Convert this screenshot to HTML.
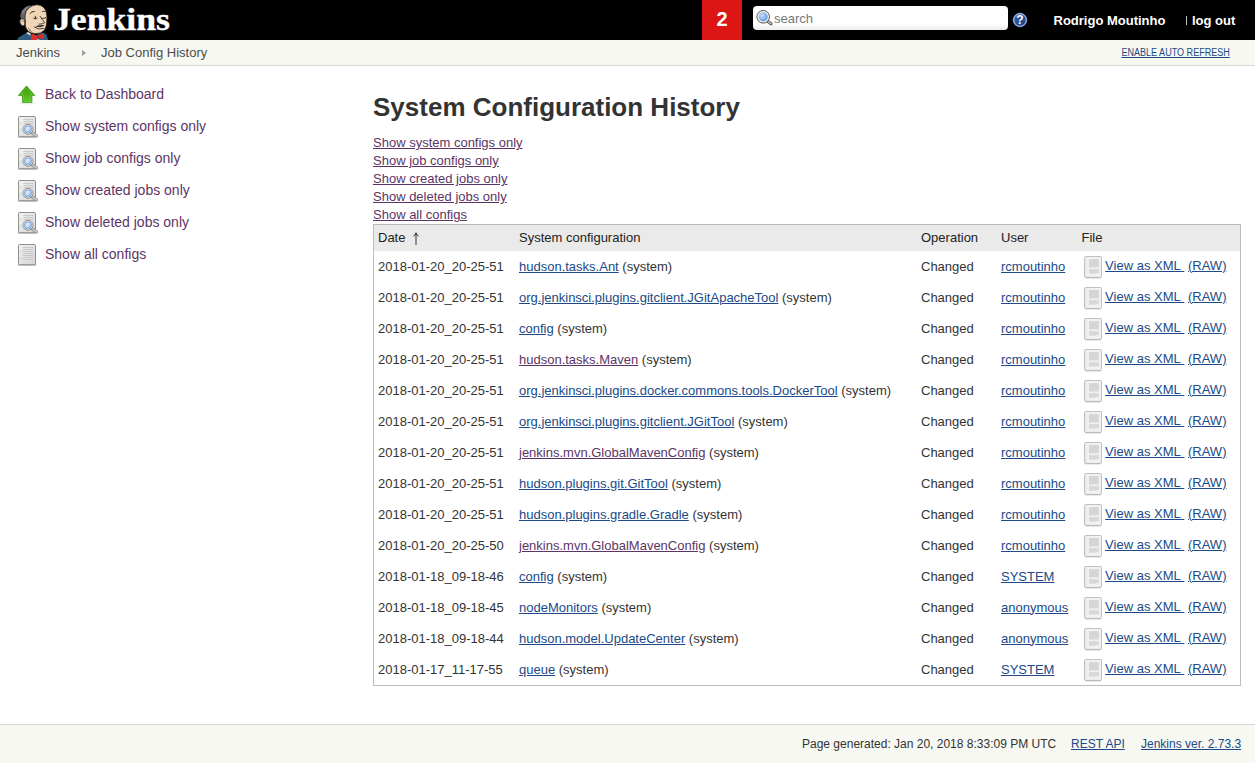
<!DOCTYPE html>
<html><head><meta charset="utf-8"><title>Job Config History [Jenkins]</title>
<style>
*{box-sizing:border-box}
html,body{margin:0;padding:0}
body{width:1255px;height:763px;overflow:hidden;background:#fff;font-family:"Liberation Sans",sans-serif;font-size:13px;color:#333;position:relative}
a{color:#204a87;text-decoration:underline}
a.v{color:#5c3566}
#header{position:absolute;left:0;top:0;width:1255px;height:40px;background:#000}
#logo{position:absolute;left:0;top:0}
#title{position:absolute;left:53px;top:-1px;font-family:"Liberation Serif",serif;font-weight:bold;font-size:32px;color:#fff;line-height:40px;transform:scaleX(1.115);transform-origin:0 0;-webkit-text-stroke:.35px #fff}
#badge{position:absolute;left:702px;top:0;width:40px;height:40px;background:#dc1515;color:#fff;font-weight:bold;font-size:20px;line-height:38px;text-align:center}
#search{position:absolute;left:753px;top:6px;width:255px;height:24px;background:linear-gradient(#fff 70%,#ededed);border-radius:4px}
#search span{position:absolute;left:21px;top:5px;font-size:13px;color:#777;line-height:15px}
#search svg{position:absolute;left:3px;top:3px}
#help{position:absolute;left:1012px;top:12px}
#user{position:absolute;left:1053.5px;top:13px;color:#fff;font-weight:bold;font-size:13px;line-height:16px}
#logout{position:absolute;left:1184px;top:13px;color:#fff;font-size:13px;line-height:16px}
#logout b{position:absolute;left:8px;top:0;white-space:nowrap}#logout i{position:absolute;left:2px;top:2.5px;width:1px;height:9px;background:#bbb}
#bc{position:absolute;left:0;top:40px;width:1255px;height:26px;background:#f6f8f1;border-bottom:1px solid #d3d7cf;font-size:13px;color:#4d4d4d;line-height:25px}
#bc .a{position:absolute;left:16px;top:0}
#bc .b{position:absolute;left:101px;top:0}
#bc .sep{position:absolute;left:82px;top:10px;width:0;height:0;border-left:4.5px solid #9a9a9a;border-top:3.5px solid transparent;border-bottom:3.5px solid transparent}
#bc .ar{position:absolute;right:25px;top:0;font-size:10px;transform:scaleX(.905);transform-origin:100% 50%;color:#204a87;text-decoration:underline}
#side{position:absolute;left:0;top:78px}
.task{position:absolute;left:0;height:32px;width:340px}
.task svg{position:absolute;left:15px;top:4px}
.task span{position:absolute;left:45px;top:7px;font-size:14px;color:#5c3566;line-height:18px;white-space:nowrap}
h1{position:absolute;left:373px;top:90px;margin:0;font-size:26px;font-weight:bold;color:#333;line-height:34px;white-space:nowrap}
#links{position:absolute;left:373px;top:134px;line-height:18px;font-size:13px}
#links a{display:block;color:#5c3566;white-space:nowrap}
table{position:absolute;left:373px;top:224px;width:868px;border-collapse:collapse;border:1px solid #bbb;font-size:13px}
th{background:#eaeaea;font-weight:normal;text-align:left;height:26px;padding:0 4px;color:#222}
td{height:31px;padding:0 4px;white-space:nowrap;color:#333;vertical-align:middle}
td:nth-child(2),th:nth-child(2){padding-left:4.5px}td:nth-child(3),th:nth-child(3),td:nth-child(4),th:nth-child(4){padding-left:3.5px}td.f{padding:0}td.f div{position:relative;height:31px;padding-left:27.6px;line-height:29px}
.di{position:absolute;left:6px;top:5px}
#footer{position:absolute;left:0;top:724px;width:1255px;height:39px;background:#f6f8f1;border-top:1px solid #d3d7cf;font-size:12px;color:#333}
#footer span{position:absolute;top:12px;line-height:15px;white-space:nowrap}
</style></head><body>
<div id="header">
<svg id="logo" width="60" height="40" viewBox="0 0 60 40">
<path d="M17 40 L18.5 37.5 L26 33 L34 36 L43 32.5 L46.5 34.5 L48.2 40 Z" fill="#2d5c7f"/>
<path d="M26 33 L30 35.5 L31 33.8 L28 32 Z" fill="#d9dde0"/>
<path d="M21.3 12.6 Q24.6 6 30.8 5.3 L27.5 12 L26.5 21 L21.4 19.6 Q19.4 16 21.3 12.6 Z" fill="#626267"/>
<path d="M21.6 12 Q24.6 7.6 28.4 6.4 M22.4 14 Q24.4 10 26.6 8.4" stroke="#a4a4a8" stroke-width=".7" fill="none"/>
<path d="M25.3 21 Q24.2 13 27.8 9 Q31.5 4.8 37 4.8 Q44 5 46.3 12 Q47.3 16 46.8 21 Q46.8 26 44.5 30 Q41 34 36 33.6 Q31.5 34.3 27.8 31 Q24.5 27 25.3 21 Z" fill="#f0d6b7" stroke="#1d1a16" stroke-width=".7"/>
<path d="M24.6 19.6 Q21 17.6 19.8 20.6 Q19.4 24.6 22.8 26 Q24.4 25.8 24.8 24.2 Z" fill="#f0d6b7" stroke="#1d1a16" stroke-width=".7"/>
<path d="M21.3 21.5 Q22.3 20.2 23.6 21.2" stroke="#3a2a1c" stroke-width=".6" fill="none"/>
<path d="M30 13.6 Q31.6 11 34.2 11.4" stroke="#1d1a16" stroke-width=".9" fill="none" stroke-linecap="round"/>
<path d="M42.2 11.6 Q44 10.8 45.4 11.6" stroke="#1d1a16" stroke-width=".8" fill="none" stroke-linecap="round"/>
<path d="M33.6 18.4 Q35.2 19.6 37 18.2 M35.2 16.2 L35.6 18" stroke="#1d1a16" stroke-width=".9" fill="none" stroke-linecap="round"/>
<path d="M42.6 18.4 Q44.4 18.8 45.8 17.6" stroke="#1d1a16" stroke-width=".9" fill="none" stroke-linecap="round"/>
<path d="M40.2 16.4 Q42 20 44.8 22.6 Q43 24.2 39 24.2" stroke="#1d1a16" stroke-width=".8" fill="none" stroke-linecap="round"/>
<path d="M35.6 26.2 Q38.4 25 39.6 25.6 Q42 24.6 44.8 25.6 Q42.4 27.2 39.6 27 Q37.6 27.4 35.6 26.2 Z" fill="#2e2620"/>
<path d="M34.2 27 Q38.6 30.4 43.6 28.4" stroke="#1d1a16" stroke-width=".8" fill="none" stroke-linecap="round"/>
<path d="M28.4 28.2 Q30.4 31.4 33 33.4" stroke="#1d1a16" stroke-width=".6" fill="none"/>
<path d="M31 34.2 Q33 33.2 37.6 36 Q41 33.4 43.8 33.8 Q44.4 36.4 43.6 39 Q41 39.4 38.4 37.6 L37.4 40 L31.4 40 Q30.4 37 31 34.2 Z" fill="#d8302a"/>
<path d="M37.4 35.8 L38.8 35.8 L38.8 38 L37.4 38 Z" fill="#b21f1b"/>
<path d="M38 39 L39.6 40 L37 40 Z" fill="#e9e9e9"/>
</svg>
<div id="title">Jenkins</div>
<div id="badge">2</div>
<div id="search"><svg width="20" height="20" viewBox="0 0 20 20"><defs><radialGradient id="sg" cx=".4" cy=".35" r=".7"><stop offset="0" stop-color="#c9dff6"/><stop offset="1" stop-color="#5b96dc"/></radialGradient></defs><path d="M11.6 12.2 L15 14.8" stroke="#555" stroke-width="3.2" stroke-linecap="round"/><path d="M12 12.5 L14.9 14.7" stroke="#d0d0d0" stroke-width="1.3" stroke-linecap="round"/><circle cx="7.2" cy="7.8" r="6.3" fill="#f4f4f4" stroke="#555" stroke-width="1"/><circle cx="7.2" cy="7.8" r="4.6" fill="url(#sg)"/></svg><span>search</span></div>
<svg id="help" width="16" height="16" viewBox="0 0 16 16"><defs><linearGradient id="hg" x1="0" y1="0" x2="1" y2="1"><stop offset="0" stop-color="#3563b3"/><stop offset="1" stop-color="#1e3d7c"/></linearGradient></defs><circle cx="8" cy="8" r="7.5" fill="#1c3d80"/><circle cx="8" cy="8" r="6.3" fill="url(#hg)" stroke="#fff" stroke-width=".8"/><text x="8" y="12.2" font-family="Liberation Sans" font-weight="bold" font-size="12" fill="#fff" text-anchor="middle">?</text></svg>
<div id="user">Rodrigo Moutinho</div>
<div id="logout"><i></i><b>log out</b></div>
</div>
<div id="bc"><span class="a">Jenkins</span><i class="sep"></i><span class="b">Job Config History</span><span class="ar">ENABLE AUTO REFRESH</span></div>
<div id="side">
<div class="task" style="top:0"><svg width="26" height="26" viewBox="0 0 26 26"><defs><linearGradient id="ag" x1="0" y1="0" x2="0" y2="1"><stop offset="0" stop-color="#3f9c12"/><stop offset=".55" stop-color="#4fb31d"/><stop offset="1" stop-color="#63c92f"/></linearGradient></defs><ellipse cx="12.3" cy="21.4" rx="8" ry="1" fill="#e9e9e9"/><path d="M11.5 3.9 L19.8 13.4 L16.9 13.4 L16.9 20.4 L7.5 20.4 L7.5 13.4 L3.4 13.4 Z" fill="url(#ag)" stroke="#3c9710" stroke-width=".8" stroke-linejoin="round"/><path d="M11.5 6 L17.5 12.6 L15.8 12.6 L15.8 19.7 L8.6 19.7 L8.6 12.6 L5.5 12.6 Z" fill="none" stroke="#7fd44f" stroke-width=".6" opacity=".6"/></svg><span>Back to Dashboard</span></div>
<div class="task" style="top:32px"><svg width="26" height="26" viewBox="0 0 26 26"><defs><linearGradient id="dg" x1="0" y1="0" x2="1" y2="1"><stop offset="0" stop-color="#f3f3f3"/><stop offset="1" stop-color="#d4d4d4"/></linearGradient><radialGradient id="mg" cx=".4" cy=".35" r=".75"><stop offset="0" stop-color="#e4eefa"/><stop offset="1" stop-color="#8fb4e3"/></radialGradient></defs><rect x="2.6" y="22.2" width="18.8" height="1.6" rx=".8" fill="#b9b9b9"/><rect x="3.5" y="2.5" width="17" height="20.2" rx="1" fill="url(#dg)" stroke="#8f8f8f"/><path d="M8.5 5.5h9.5M8.5 7.5h9.5M8.5 9.5h9.5" stroke="#c4c4c4" stroke-width=".9"/><circle cx="5.6" cy="9.2" r=".5" fill="#aaa"/><circle cx="5.6" cy="16" r=".5" fill="#aaa"/><path d="M17.2 19 L21.6 22" stroke="#8c8c8c" stroke-width="3" stroke-linecap="round"/><path d="M17.6 19.2 L21.5 21.9" stroke="#d6d6d6" stroke-width="1.3" stroke-linecap="round"/><circle cx="13" cy="15.3" r="5" fill="#ececec" stroke="#8a8a8a" stroke-width=".9"/><circle cx="13" cy="15.3" r="3.6" fill="url(#mg)" stroke="#6f9bd6" stroke-width=".8"/></svg><span>Show system configs only</span></div>
<div class="task" style="top:64px"><svg width="26" height="26" viewBox="0 0 26 26"><defs><linearGradient id="dg" x1="0" y1="0" x2="1" y2="1"><stop offset="0" stop-color="#f3f3f3"/><stop offset="1" stop-color="#d4d4d4"/></linearGradient><radialGradient id="mg" cx=".4" cy=".35" r=".75"><stop offset="0" stop-color="#e4eefa"/><stop offset="1" stop-color="#8fb4e3"/></radialGradient></defs><rect x="2.6" y="22.2" width="18.8" height="1.6" rx=".8" fill="#b9b9b9"/><rect x="3.5" y="2.5" width="17" height="20.2" rx="1" fill="url(#dg)" stroke="#8f8f8f"/><path d="M8.5 5.5h9.5M8.5 7.5h9.5M8.5 9.5h9.5" stroke="#c4c4c4" stroke-width=".9"/><circle cx="5.6" cy="9.2" r=".5" fill="#aaa"/><circle cx="5.6" cy="16" r=".5" fill="#aaa"/><path d="M17.2 19 L21.6 22" stroke="#8c8c8c" stroke-width="3" stroke-linecap="round"/><path d="M17.6 19.2 L21.5 21.9" stroke="#d6d6d6" stroke-width="1.3" stroke-linecap="round"/><circle cx="13" cy="15.3" r="5" fill="#ececec" stroke="#8a8a8a" stroke-width=".9"/><circle cx="13" cy="15.3" r="3.6" fill="url(#mg)" stroke="#6f9bd6" stroke-width=".8"/></svg><span>Show job configs only</span></div>
<div class="task" style="top:96px"><svg width="26" height="26" viewBox="0 0 26 26"><defs><linearGradient id="dg" x1="0" y1="0" x2="1" y2="1"><stop offset="0" stop-color="#f3f3f3"/><stop offset="1" stop-color="#d4d4d4"/></linearGradient><radialGradient id="mg" cx=".4" cy=".35" r=".75"><stop offset="0" stop-color="#e4eefa"/><stop offset="1" stop-color="#8fb4e3"/></radialGradient></defs><rect x="2.6" y="22.2" width="18.8" height="1.6" rx=".8" fill="#b9b9b9"/><rect x="3.5" y="2.5" width="17" height="20.2" rx="1" fill="url(#dg)" stroke="#8f8f8f"/><path d="M8.5 5.5h9.5M8.5 7.5h9.5M8.5 9.5h9.5" stroke="#c4c4c4" stroke-width=".9"/><circle cx="5.6" cy="9.2" r=".5" fill="#aaa"/><circle cx="5.6" cy="16" r=".5" fill="#aaa"/><path d="M17.2 19 L21.6 22" stroke="#8c8c8c" stroke-width="3" stroke-linecap="round"/><path d="M17.6 19.2 L21.5 21.9" stroke="#d6d6d6" stroke-width="1.3" stroke-linecap="round"/><circle cx="13" cy="15.3" r="5" fill="#ececec" stroke="#8a8a8a" stroke-width=".9"/><circle cx="13" cy="15.3" r="3.6" fill="url(#mg)" stroke="#6f9bd6" stroke-width=".8"/></svg><span>Show created jobs only</span></div>
<div class="task" style="top:128px"><svg width="26" height="26" viewBox="0 0 26 26"><defs><linearGradient id="dg" x1="0" y1="0" x2="1" y2="1"><stop offset="0" stop-color="#f3f3f3"/><stop offset="1" stop-color="#d4d4d4"/></linearGradient><radialGradient id="mg" cx=".4" cy=".35" r=".75"><stop offset="0" stop-color="#e4eefa"/><stop offset="1" stop-color="#8fb4e3"/></radialGradient></defs><rect x="2.6" y="22.2" width="18.8" height="1.6" rx=".8" fill="#b9b9b9"/><rect x="3.5" y="2.5" width="17" height="20.2" rx="1" fill="url(#dg)" stroke="#8f8f8f"/><path d="M8.5 5.5h9.5M8.5 7.5h9.5M8.5 9.5h9.5" stroke="#c4c4c4" stroke-width=".9"/><circle cx="5.6" cy="9.2" r=".5" fill="#aaa"/><circle cx="5.6" cy="16" r=".5" fill="#aaa"/><path d="M17.2 19 L21.6 22" stroke="#8c8c8c" stroke-width="3" stroke-linecap="round"/><path d="M17.6 19.2 L21.5 21.9" stroke="#d6d6d6" stroke-width="1.3" stroke-linecap="round"/><circle cx="13" cy="15.3" r="5" fill="#ececec" stroke="#8a8a8a" stroke-width=".9"/><circle cx="13" cy="15.3" r="3.6" fill="url(#mg)" stroke="#6f9bd6" stroke-width=".8"/></svg><span>Show deleted jobs only</span></div>
<div class="task" style="top:160px"><svg width="26" height="26" viewBox="0 0 26 26"><rect x="2.6" y="22.2" width="18.8" height="1.6" rx=".8" fill="#b9b9b9"/><rect x="3.5" y="2.5" width="17" height="20.2" rx="1" fill="url(#dg)" stroke="#8f8f8f"/><path d="M7.5 5.5h10.5M7.5 7.5h10.5M7.5 9.5h10.5M7.5 11.5h10.5M7.5 13.5h10.5M7.5 15.5h10.5M7.5 17.5h10.5" stroke="#c4c4c4" stroke-width=".9"/><circle cx="5.4" cy="9.2" r=".5" fill="#aaa"/><circle cx="5.4" cy="16" r=".5" fill="#aaa"/></svg><span>Show all configs</span></div>
</div>
<h1>System Configuration History</h1>
<div id="links"><a>Show system configs only</a><a>Show job configs only</a><a>Show created jobs only</a><a>Show deleted jobs only</a><a>Show all configs</a></div>
<table>
<colgroup><col style="width:141px"><col style="width:403px"><col style="width:80px"><col style="width:80px"><col></colgroup>
<tr><th>Date<svg style="position:absolute;left:38px;top:7px" width="8" height="14" viewBox="0 0 8 14"><path d="M4 .8 V13 M1.7 4.4 L4 .9 L6.3 4.4" stroke="#333" stroke-width="1" fill="none"/></svg></th><th>System configuration</th><th>Operation</th><th>User</th><th>File</th></tr>
<tr><td>2018-01-20_20-25-51</td><td><a class="" href="#">hudson.tasks.Ant</a> (system)</td><td>Changed</td><td><a href="#">rcmoutinho</a></td><td class="f"><div><svg class="di" width="19" height="23" viewBox="0 0 19 23"><rect x="1" y="20.9" width="16" height="1.3" rx=".6" fill="#a9a9a9"/><rect x=".5" y=".5" width="17" height="20.9" rx="1.1" fill="#f1f1f1" stroke="#b3b3b3" stroke-width=".8"/><rect x="1.2" y="1.4" width="1.6" height="19.2" fill="#e6e6e6"/><rect x="5" y="3.1" width="9.8" height="8.4" fill="#d5d5d5"/><rect x="5" y="13.1" width="9.8" height="4.6" fill="#d8d8d8"/><rect x="9" y="10.8" width="5.8" height=".8" fill="#e6e6e6"/><rect x="12" y="17" width="2.8" height=".8" fill="#eee"/></svg><a href="#">View as XML&nbsp;</a> <a href="#">(RAW)</a></div></td></tr>
<tr><td>2018-01-20_20-25-51</td><td><a class="" href="#">org.jenkinsci.plugins.gitclient.JGitApacheTool</a> (system)</td><td>Changed</td><td><a href="#">rcmoutinho</a></td><td class="f"><div><svg class="di" width="19" height="23" viewBox="0 0 19 23"><rect x="1" y="20.9" width="16" height="1.3" rx=".6" fill="#a9a9a9"/><rect x=".5" y=".5" width="17" height="20.9" rx="1.1" fill="#f1f1f1" stroke="#b3b3b3" stroke-width=".8"/><rect x="1.2" y="1.4" width="1.6" height="19.2" fill="#e6e6e6"/><rect x="5" y="3.1" width="9.8" height="8.4" fill="#d5d5d5"/><rect x="5" y="13.1" width="9.8" height="4.6" fill="#d8d8d8"/><rect x="9" y="10.8" width="5.8" height=".8" fill="#e6e6e6"/><rect x="12" y="17" width="2.8" height=".8" fill="#eee"/></svg><a href="#">View as XML&nbsp;</a> <a href="#">(RAW)</a></div></td></tr>
<tr><td>2018-01-20_20-25-51</td><td><a class="" href="#">config</a> (system)</td><td>Changed</td><td><a href="#">rcmoutinho</a></td><td class="f"><div><svg class="di" width="19" height="23" viewBox="0 0 19 23"><rect x="1" y="20.9" width="16" height="1.3" rx=".6" fill="#a9a9a9"/><rect x=".5" y=".5" width="17" height="20.9" rx="1.1" fill="#f1f1f1" stroke="#b3b3b3" stroke-width=".8"/><rect x="1.2" y="1.4" width="1.6" height="19.2" fill="#e6e6e6"/><rect x="5" y="3.1" width="9.8" height="8.4" fill="#d5d5d5"/><rect x="5" y="13.1" width="9.8" height="4.6" fill="#d8d8d8"/><rect x="9" y="10.8" width="5.8" height=".8" fill="#e6e6e6"/><rect x="12" y="17" width="2.8" height=".8" fill="#eee"/></svg><a href="#">View as XML&nbsp;</a> <a href="#">(RAW)</a></div></td></tr>
<tr><td>2018-01-20_20-25-51</td><td><a class="v" href="#">hudson.tasks.Maven</a> (system)</td><td>Changed</td><td><a href="#">rcmoutinho</a></td><td class="f"><div><svg class="di" width="19" height="23" viewBox="0 0 19 23"><rect x="1" y="20.9" width="16" height="1.3" rx=".6" fill="#a9a9a9"/><rect x=".5" y=".5" width="17" height="20.9" rx="1.1" fill="#f1f1f1" stroke="#b3b3b3" stroke-width=".8"/><rect x="1.2" y="1.4" width="1.6" height="19.2" fill="#e6e6e6"/><rect x="5" y="3.1" width="9.8" height="8.4" fill="#d5d5d5"/><rect x="5" y="13.1" width="9.8" height="4.6" fill="#d8d8d8"/><rect x="9" y="10.8" width="5.8" height=".8" fill="#e6e6e6"/><rect x="12" y="17" width="2.8" height=".8" fill="#eee"/></svg><a href="#">View as XML&nbsp;</a> <a href="#">(RAW)</a></div></td></tr>
<tr><td>2018-01-20_20-25-51</td><td><a class="" href="#">org.jenkinsci.plugins.docker.commons.tools.DockerTool</a> (system)</td><td>Changed</td><td><a href="#">rcmoutinho</a></td><td class="f"><div><svg class="di" width="19" height="23" viewBox="0 0 19 23"><rect x="1" y="20.9" width="16" height="1.3" rx=".6" fill="#a9a9a9"/><rect x=".5" y=".5" width="17" height="20.9" rx="1.1" fill="#f1f1f1" stroke="#b3b3b3" stroke-width=".8"/><rect x="1.2" y="1.4" width="1.6" height="19.2" fill="#e6e6e6"/><rect x="5" y="3.1" width="9.8" height="8.4" fill="#d5d5d5"/><rect x="5" y="13.1" width="9.8" height="4.6" fill="#d8d8d8"/><rect x="9" y="10.8" width="5.8" height=".8" fill="#e6e6e6"/><rect x="12" y="17" width="2.8" height=".8" fill="#eee"/></svg><a href="#">View as XML&nbsp;</a> <a href="#">(RAW)</a></div></td></tr>
<tr><td>2018-01-20_20-25-51</td><td><a class="" href="#">org.jenkinsci.plugins.gitclient.JGitTool</a> (system)</td><td>Changed</td><td><a href="#">rcmoutinho</a></td><td class="f"><div><svg class="di" width="19" height="23" viewBox="0 0 19 23"><rect x="1" y="20.9" width="16" height="1.3" rx=".6" fill="#a9a9a9"/><rect x=".5" y=".5" width="17" height="20.9" rx="1.1" fill="#f1f1f1" stroke="#b3b3b3" stroke-width=".8"/><rect x="1.2" y="1.4" width="1.6" height="19.2" fill="#e6e6e6"/><rect x="5" y="3.1" width="9.8" height="8.4" fill="#d5d5d5"/><rect x="5" y="13.1" width="9.8" height="4.6" fill="#d8d8d8"/><rect x="9" y="10.8" width="5.8" height=".8" fill="#e6e6e6"/><rect x="12" y="17" width="2.8" height=".8" fill="#eee"/></svg><a href="#">View as XML&nbsp;</a> <a href="#">(RAW)</a></div></td></tr>
<tr><td>2018-01-20_20-25-51</td><td><a class="v" href="#">jenkins.mvn.GlobalMavenConfig</a> (system)</td><td>Changed</td><td><a href="#">rcmoutinho</a></td><td class="f"><div><svg class="di" width="19" height="23" viewBox="0 0 19 23"><rect x="1" y="20.9" width="16" height="1.3" rx=".6" fill="#a9a9a9"/><rect x=".5" y=".5" width="17" height="20.9" rx="1.1" fill="#f1f1f1" stroke="#b3b3b3" stroke-width=".8"/><rect x="1.2" y="1.4" width="1.6" height="19.2" fill="#e6e6e6"/><rect x="5" y="3.1" width="9.8" height="8.4" fill="#d5d5d5"/><rect x="5" y="13.1" width="9.8" height="4.6" fill="#d8d8d8"/><rect x="9" y="10.8" width="5.8" height=".8" fill="#e6e6e6"/><rect x="12" y="17" width="2.8" height=".8" fill="#eee"/></svg><a href="#">View as XML&nbsp;</a> <a href="#">(RAW)</a></div></td></tr>
<tr><td>2018-01-20_20-25-51</td><td><a class="" href="#">hudson.plugins.git.GitTool</a> (system)</td><td>Changed</td><td><a href="#">rcmoutinho</a></td><td class="f"><div><svg class="di" width="19" height="23" viewBox="0 0 19 23"><rect x="1" y="20.9" width="16" height="1.3" rx=".6" fill="#a9a9a9"/><rect x=".5" y=".5" width="17" height="20.9" rx="1.1" fill="#f1f1f1" stroke="#b3b3b3" stroke-width=".8"/><rect x="1.2" y="1.4" width="1.6" height="19.2" fill="#e6e6e6"/><rect x="5" y="3.1" width="9.8" height="8.4" fill="#d5d5d5"/><rect x="5" y="13.1" width="9.8" height="4.6" fill="#d8d8d8"/><rect x="9" y="10.8" width="5.8" height=".8" fill="#e6e6e6"/><rect x="12" y="17" width="2.8" height=".8" fill="#eee"/></svg><a href="#">View as XML&nbsp;</a> <a href="#">(RAW)</a></div></td></tr>
<tr><td>2018-01-20_20-25-51</td><td><a class="" href="#">hudson.plugins.gradle.Gradle</a> (system)</td><td>Changed</td><td><a href="#">rcmoutinho</a></td><td class="f"><div><svg class="di" width="19" height="23" viewBox="0 0 19 23"><rect x="1" y="20.9" width="16" height="1.3" rx=".6" fill="#a9a9a9"/><rect x=".5" y=".5" width="17" height="20.9" rx="1.1" fill="#f1f1f1" stroke="#b3b3b3" stroke-width=".8"/><rect x="1.2" y="1.4" width="1.6" height="19.2" fill="#e6e6e6"/><rect x="5" y="3.1" width="9.8" height="8.4" fill="#d5d5d5"/><rect x="5" y="13.1" width="9.8" height="4.6" fill="#d8d8d8"/><rect x="9" y="10.8" width="5.8" height=".8" fill="#e6e6e6"/><rect x="12" y="17" width="2.8" height=".8" fill="#eee"/></svg><a href="#">View as XML&nbsp;</a> <a href="#">(RAW)</a></div></td></tr>
<tr><td>2018-01-20_20-25-50</td><td><a class="v" href="#">jenkins.mvn.GlobalMavenConfig</a> (system)</td><td>Changed</td><td><a href="#">rcmoutinho</a></td><td class="f"><div><svg class="di" width="19" height="23" viewBox="0 0 19 23"><rect x="1" y="20.9" width="16" height="1.3" rx=".6" fill="#a9a9a9"/><rect x=".5" y=".5" width="17" height="20.9" rx="1.1" fill="#f1f1f1" stroke="#b3b3b3" stroke-width=".8"/><rect x="1.2" y="1.4" width="1.6" height="19.2" fill="#e6e6e6"/><rect x="5" y="3.1" width="9.8" height="8.4" fill="#d5d5d5"/><rect x="5" y="13.1" width="9.8" height="4.6" fill="#d8d8d8"/><rect x="9" y="10.8" width="5.8" height=".8" fill="#e6e6e6"/><rect x="12" y="17" width="2.8" height=".8" fill="#eee"/></svg><a href="#">View as XML&nbsp;</a> <a href="#">(RAW)</a></div></td></tr>
<tr><td>2018-01-18_09-18-46</td><td><a class="" href="#">config</a> (system)</td><td>Changed</td><td><a href="#">SYSTEM</a></td><td class="f"><div><svg class="di" width="19" height="23" viewBox="0 0 19 23"><rect x="1" y="20.9" width="16" height="1.3" rx=".6" fill="#a9a9a9"/><rect x=".5" y=".5" width="17" height="20.9" rx="1.1" fill="#f1f1f1" stroke="#b3b3b3" stroke-width=".8"/><rect x="1.2" y="1.4" width="1.6" height="19.2" fill="#e6e6e6"/><rect x="5" y="3.1" width="9.8" height="8.4" fill="#d5d5d5"/><rect x="5" y="13.1" width="9.8" height="4.6" fill="#d8d8d8"/><rect x="9" y="10.8" width="5.8" height=".8" fill="#e6e6e6"/><rect x="12" y="17" width="2.8" height=".8" fill="#eee"/></svg><a href="#">View as XML&nbsp;</a> <a href="#">(RAW)</a></div></td></tr>
<tr><td>2018-01-18_09-18-45</td><td><a class="" href="#">nodeMonitors</a> (system)</td><td>Changed</td><td><a href="#">anonymous</a></td><td class="f"><div><svg class="di" width="19" height="23" viewBox="0 0 19 23"><rect x="1" y="20.9" width="16" height="1.3" rx=".6" fill="#a9a9a9"/><rect x=".5" y=".5" width="17" height="20.9" rx="1.1" fill="#f1f1f1" stroke="#b3b3b3" stroke-width=".8"/><rect x="1.2" y="1.4" width="1.6" height="19.2" fill="#e6e6e6"/><rect x="5" y="3.1" width="9.8" height="8.4" fill="#d5d5d5"/><rect x="5" y="13.1" width="9.8" height="4.6" fill="#d8d8d8"/><rect x="9" y="10.8" width="5.8" height=".8" fill="#e6e6e6"/><rect x="12" y="17" width="2.8" height=".8" fill="#eee"/></svg><a href="#">View as XML&nbsp;</a> <a href="#">(RAW)</a></div></td></tr>
<tr><td>2018-01-18_09-18-44</td><td><a class="" href="#">hudson.model.UpdateCenter</a> (system)</td><td>Changed</td><td><a href="#">anonymous</a></td><td class="f"><div><svg class="di" width="19" height="23" viewBox="0 0 19 23"><rect x="1" y="20.9" width="16" height="1.3" rx=".6" fill="#a9a9a9"/><rect x=".5" y=".5" width="17" height="20.9" rx="1.1" fill="#f1f1f1" stroke="#b3b3b3" stroke-width=".8"/><rect x="1.2" y="1.4" width="1.6" height="19.2" fill="#e6e6e6"/><rect x="5" y="3.1" width="9.8" height="8.4" fill="#d5d5d5"/><rect x="5" y="13.1" width="9.8" height="4.6" fill="#d8d8d8"/><rect x="9" y="10.8" width="5.8" height=".8" fill="#e6e6e6"/><rect x="12" y="17" width="2.8" height=".8" fill="#eee"/></svg><a href="#">View as XML&nbsp;</a> <a href="#">(RAW)</a></div></td></tr>
<tr><td>2018-01-17_11-17-55</td><td><a class="" href="#">queue</a> (system)</td><td>Changed</td><td><a href="#">SYSTEM</a></td><td class="f"><div><svg class="di" width="19" height="23" viewBox="0 0 19 23"><rect x="1" y="20.9" width="16" height="1.3" rx=".6" fill="#a9a9a9"/><rect x=".5" y=".5" width="17" height="20.9" rx="1.1" fill="#f1f1f1" stroke="#b3b3b3" stroke-width=".8"/><rect x="1.2" y="1.4" width="1.6" height="19.2" fill="#e6e6e6"/><rect x="5" y="3.1" width="9.8" height="8.4" fill="#d5d5d5"/><rect x="5" y="13.1" width="9.8" height="4.6" fill="#d8d8d8"/><rect x="9" y="10.8" width="5.8" height=".8" fill="#e6e6e6"/><rect x="12" y="17" width="2.8" height=".8" fill="#eee"/></svg><a href="#">View as XML&nbsp;</a> <a href="#">(RAW)</a></div></td></tr>
</table>
<div id="footer"><span style="left:802px">Page generated: Jan 20, 2018 8:33:09 PM UTC</span><span style="left:1071px"><a href="#">REST API</a></span><span style="left:1141px"><a href="#">Jenkins ver. 2.73.3</a></span></div>
</body></html>
